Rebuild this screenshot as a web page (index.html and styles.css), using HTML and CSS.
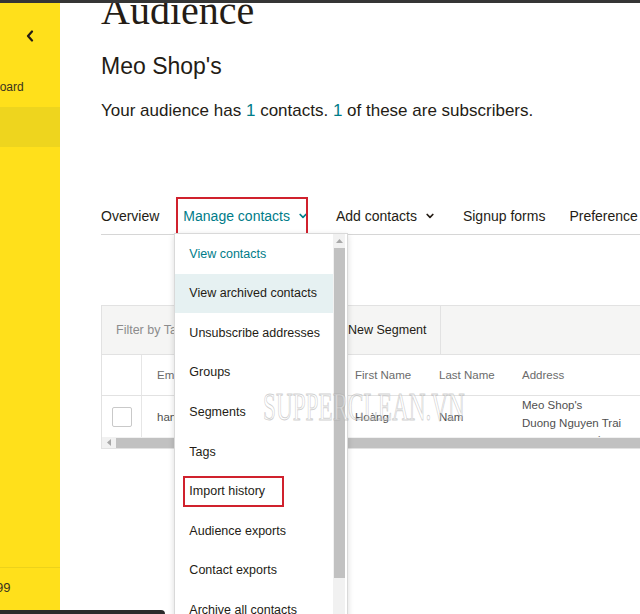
FILE: index.html
```html
<!DOCTYPE html>
<html lang="en">
<head>
<meta charset="utf-8">
<title>Audience</title>
<link rel="stylesheet" href="styles.css">
</head>
<body>
<div class="topbar"></div>
<div class="app">
  <aside class="sidebar">
    <div class="collapse">
      <svg width="8" height="12" viewBox="0 0 8 12"><polyline points="6,1.5 2,6 6,10.5" fill="none" stroke="#241c15" stroke-width="2.2" stroke-linecap="round" stroke-linejoin="round"/></svg>
    </div>
    <div class="nav-item"><span class="nav-label">Dashboard</span></div>
    <div class="nav-item active"></div>
    <div class="sidebar-spacer"></div>
    <div class="plan"><span class="plan-label">$9.99</span></div>
  </aside>
  <main class="main">
    <h1 class="title">Audience</h1>
    <h2 class="subtitle">Meo Shop's</h2>
    <p class="summary">Your audience has <span class="num">1</span> contacts. <span class="num">1</span> of these are subscribers.</p>

    <nav class="tabs">
      <div class="tab">Overview</div>
      <div class="tab tab-active">
        <span>Manage contacts</span>
        <svg class="chev" width="8" height="6" viewBox="0 0 8 6"><polyline points="1.2,1.5 4,4.3 6.8,1.5" fill="none" stroke="currentColor" stroke-width="1.7" stroke-linecap="round" stroke-linejoin="round"/></svg>
        <div class="mark mark-tab"></div>
        <div class="menu">
          <div class="menu-list">
            <div class="menu-item menu-current">View contacts</div>
            <div class="menu-item menu-hover">View archived contacts</div>
            <div class="menu-item">Unsubscribe addresses</div>
            <div class="menu-item">Groups</div>
            <div class="menu-item">Segments</div>
            <div class="menu-item">Tags</div>
            <div class="menu-item">Import history<div class="mark mark-item"></div></div>
            <div class="menu-item">Audience exports</div>
            <div class="menu-item">Contact exports</div>
            <div class="menu-item">Archive all contacts</div>
          </div>
          <div class="vscroll">
            <div class="vscroll-arrow"><svg width="7" height="4" viewBox="0 0 7 4"><polygon points="0,4 3.5,0 7,4" fill="#a8a8a8"/></svg></div>
            <div class="vscroll-thumb"></div>
          </div>
        </div>
      </div>
      <div class="tab">
        <span>Add contacts</span>
        <svg class="chev" width="8" height="6" viewBox="0 0 8 6"><polyline points="1.2,1.5 4,4.3 6.8,1.5" fill="none" stroke="currentColor" stroke-width="1.7" stroke-linecap="round" stroke-linejoin="round"/></svg>
      </div>
      <div class="tab">Signup forms</div>
      <div class="tab">Preference center</div>
    </nav>

    <section class="card">
      <div class="toolbar">
        <div class="tool tool-filter">Filter by Tag</div>
        <div class="tool tool-seg">New Segment</div>
        <div class="tool tool-rest"></div>
      </div>
      <div class="grid">
        <div class="cell cell-check head"></div>
        <div class="cell head">Email Address</div>
        <div class="cell head">First Name</div>
        <div class="cell head">Last Name</div>
        <div class="cell head">Address</div>

        <div class="cell cell-check row"><span class="checkbox"></span></div>
        <div class="cell row">hanhoang@gmail.com</div>
        <div class="cell row">Hoàng</div>
        <div class="cell row">Nam</div>
        <div class="cell row cell-address">Meo Shop's<br>Duong Nguyen Trai<br>Lô 1A, Q.10, Hồ Chí Minh</div>
      </div>
      <div class="hscroll">
        <div class="hscroll-arrow"><svg width="4" height="7" viewBox="0 0 4 7"><polygon points="4,0 0,3.5 4,7" fill="#a8a8a8"/></svg></div>
        <div class="hscroll-thumb"></div>
      </div>
    </section>
  </main>
</div>
<div class="toast"></div>
<div class="watermark">SUPPERCLEAN.VN</div>
</body>
</html>
```

FILE: styles.css
```css
* { box-sizing: border-box; }
html, body { margin: 0; padding: 0; }
body {
  width: 640px;
  height: 614px;
  overflow: hidden;
  position: relative;
  background: #fff;
  font-family: "Liberation Sans", Arial, sans-serif;
  color: #241c15;
}
.topbar { height: 3px; background: #353535; }
.app { display: flex; height: 611px; }

.sidebar {
  width: 60px;
  flex: 0 0 60px;
  background: #ffe01b;
  display: flex;
  flex-direction: column;
  overflow: hidden;
}
.collapse {
  height: 24px;
  margin-top: 21px;
  padding-left: 26px;
  display: flex;
  align-items: center;
}
.nav-item {
  height: 40px;
  line-height: 40px;
  font-size: 12px;
  white-space: nowrap;
  color: #3a3320;
}
.collapse + .nav-item { margin-top: 19px; }
.nav-label { display: inline-block; margin-left: -35px; }
.nav-item.active { background: #eed51e; }
.sidebar-spacer { flex: 1; }
.plan {
  height: 47px;
  border-top: 1px solid #ecd21b;
  padding-top: 12px;
  font-size: 13px;
  line-height: 16px;
  white-space: nowrap;
  color: #3a3320;
}
.plan-label { display: inline-block; margin-left: -22px; }

.main {
  flex: 1;
  min-width: 0;
  padding-left: 41px;
  overflow: hidden;
}
.title {
  margin: -16px 0 0;
  font-family: "Liberation Serif", "Times New Roman", serif;
  font-weight: normal;
  font-size: 40px;
  line-height: 48px;
  color: #241c15;
}
.subtitle {
  margin: 17px 0 0;
  font-weight: normal;
  font-size: 23px;
  line-height: 28px;
  color: #241c15;
}
.summary {
  margin: 19px 0 0;
  font-size: 17px;
  line-height: 24px;
  color: #241c15;
  white-space: nowrap;
}
.num { color: #007c89; }

.tabs {
  margin-top: 74px;
  height: 38px;
  border-bottom: 1px solid #d6d6d6;
  display: flex;
  gap: 24px;
  white-space: nowrap;
  position: relative;
  z-index: 2;
}
.tab {
  height: 37px;
  display: flex;
  align-items: center;
  font-size: 14px;
  color: #241c15;
  position: relative;
}
.tab-active { color: #007c89; }
.chev { margin-left: 9px; margin-right: 5px; }

.mark {
  position: absolute;
  border: 2px solid #d0212d;
  pointer-events: none;
}
.mark-tab { left: -7px; top: 0; width: 132px; height: 40px; }
.mark-item { left: 8px; top: 5px; width: 101px; height: 31px; }

.menu {
  position: absolute;
  left: -9px;
  top: 36px;
  width: 174px;
  height: 420px;
  background: #fff;
  border: 1px solid #d9d9d9;
  box-shadow: 0 2px 6px rgba(0, 0, 0, 0.15);
  display: flex;
  z-index: 5;
}
.menu-list { flex: 1; }
.menu-item {
  height: 39.55px;
  display: flex;
  align-items: center;
  padding-left: 14px;
  font-size: 12.5px;
  color: #241c15;
  position: relative;
  white-space: nowrap;
}
.menu-current { color: #007c89; }
.menu-hover { background: #e6f1f2; }
.vscroll {
  width: 12px;
  margin-right: 2px;
  background: #f1f1f1;
  display: flex;
  flex-direction: column;
  align-items: center;
}
.vscroll-arrow { height: 14px; display: flex; align-items: center; }
.vscroll-thumb { width: 11px; height: 330px; background: #c1c1c1; }

.card {
  margin-top: 70px;
  width: 560px;
  border: 1px solid #e2e2e2;
  border-right: none;
  position: relative;
  z-index: 1;
}
.toolbar {
  height: 49px;
  display: flex;
  background: #f5f5f4;
  border-bottom: 1px solid #e2e2e2;
  white-space: nowrap;
}
.tool { display: flex; align-items: center; font-size: 12.5px; }
.tool-filter { width: 233px; padding-left: 14px; color: #8c8c8c; border-right: 1px solid #e2e2e2; }
.tool-seg { width: 106px; padding-left: 13px; color: #241c15; border-right: 1px solid #e2e2e2; }
.tool-rest { flex: 1; }

.grid {
  display: grid;
  grid-template-columns: 40px 198px 84px 83px 155px;
}
.cell {
  font-size: 11.5px;
  color: #5d5d5d;
  white-space: nowrap;
  overflow: hidden;
  padding-left: 15px;
  display: flex;
  align-items: center;
}
.head { height: 41px; border-bottom: 1px solid #e2e2e2; color: #6b6b6b; }
.row { height: 41px; color: #4f4f4f; }
.cell-check { padding-left: 0; justify-content: center; border-right: 1px solid #e6e6e6; }
.checkbox {
  width: 20px;
  height: 20px;
  border: 1px solid #c9c9c9;
  border-radius: 2px;
  background: #fff;
}
.cell-address {
  display: block;
  line-height: 18px;
}

.hscroll {
  height: 11px;
  background: #f1f1f1;
  display: flex;
  align-items: center;
}
.hscroll-arrow { width: 14px; display: flex; justify-content: center; }
.hscroll-thumb { flex: 1; height: 10px; background: #c1c1c1; }

.toast {
  position: absolute;
  left: 0;
  bottom: 0;
  width: 165px;
  height: 4px;
  background: #2b2b2b;
  border-top-right-radius: 5px;
  z-index: 10;
}
.watermark {
  position: absolute;
  left: 263px;
  top: 387px;
  font-family: "Liberation Serif", "Times New Roman", serif;
  font-size: 40px;
  line-height: 40px;
  white-space: nowrap;
  color: rgba(255, 255, 255, 0.35);
  -webkit-text-stroke: 1px rgba(170, 170, 170, 0.55);
  transform: scaleX(0.58);
  transform-origin: left top;
  z-index: 20;
  pointer-events: none;
}
```
